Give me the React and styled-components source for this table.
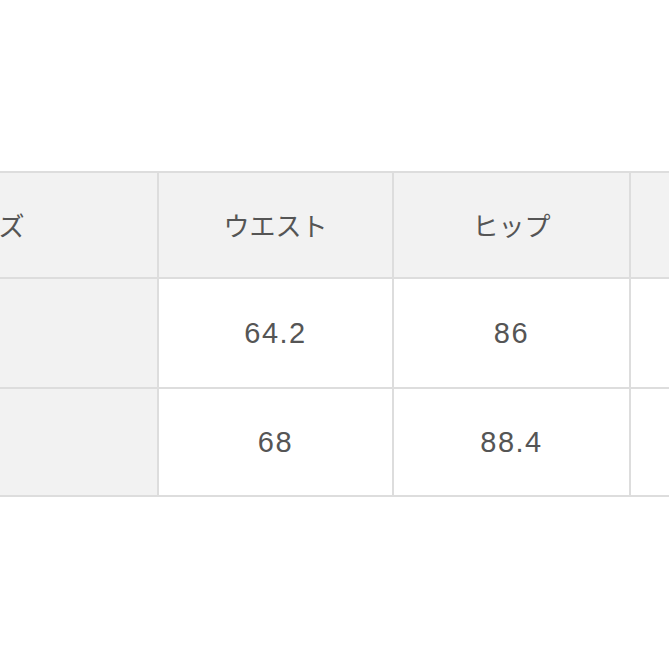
import React from "react";
import styled, { createGlobalStyle } from "styled-components";

const GlobalStyle = createGlobalStyle`
  html, body {
    margin: 0;
    padding: 0;
    background: #ffffff;
  }
  body {
    font-family: "Liberation Sans", "Noto Sans CJK JP", Arial, sans-serif;
    color: #555555;
  }
`;

const Page = styled.div`
  width: 669px;
  height: 669px;
  overflow: hidden;
  padding-top: 171px;
  box-sizing: border-box;
  background: #ffffff;
`;

const Table = styled.table`
  margin-left: -187px;
  width: 1115px;
  table-layout: fixed;
  border-collapse: collapse;
`;

const Col = styled.col`
  width: ${(p) => p.$w}px;
`;

const Row = styled.tr`
  height: ${(p) => p.$h}px;
`;

const Cell = styled.td`
  border: 2px solid #dddddd;
  padding: 0;
  text-align: center;
  vertical-align: middle;
  background: ${(p) => (p.$shade ? "#f2f2f2" : "#ffffff")};
  color: #555555;
  font-family: ${(p) =>
    p.$head
      ? `"Noto Sans CJK JP", "Liberation Sans", sans-serif`
      : `"Liberation Sans", "Noto Sans CJK JP", Arial, sans-serif`};
  font-size: ${(p) => (p.$head ? 26 : 29)}px;
  letter-spacing: ${(p) => (p.$head ? 0 : 1.5)}px;
  font-weight: 400;
  line-height: 1;
`;

const headers = ["サイズ", "ウエスト", "ヒップ", ""];
const rows = [
  { id: "s", values: ["64.2", "86", ""] },
  { id: "m", values: ["68", "88.4", ""] },
];
const rowHeights = [110, 108];

export default function App() {
  return (
    <>
      <GlobalStyle />
      <Page>
        <Table>
          <colgroup>
            <Col $w={344} />
            <Col $w={235} />
            <Col $w={237} />
            <Col $w={299} />
          </colgroup>
          <thead>
            <Row $h={106}>
              {headers.map((h, i) => (
                <Cell as="th" key={i} $head $shade>
                  {h}
                </Cell>
              ))}
            </Row>
          </thead>
          <tbody>
            {rows.map((r, i) => (
              <Row key={r.id} $h={rowHeights[i]}>
                <Cell $shade />
                {r.values.map((v, j) => (
                  <Cell key={j}>{v}</Cell>
                ))}
              </Row>
            ))}
          </tbody>
        </Table>
      </Page>
    </>
  );
}
